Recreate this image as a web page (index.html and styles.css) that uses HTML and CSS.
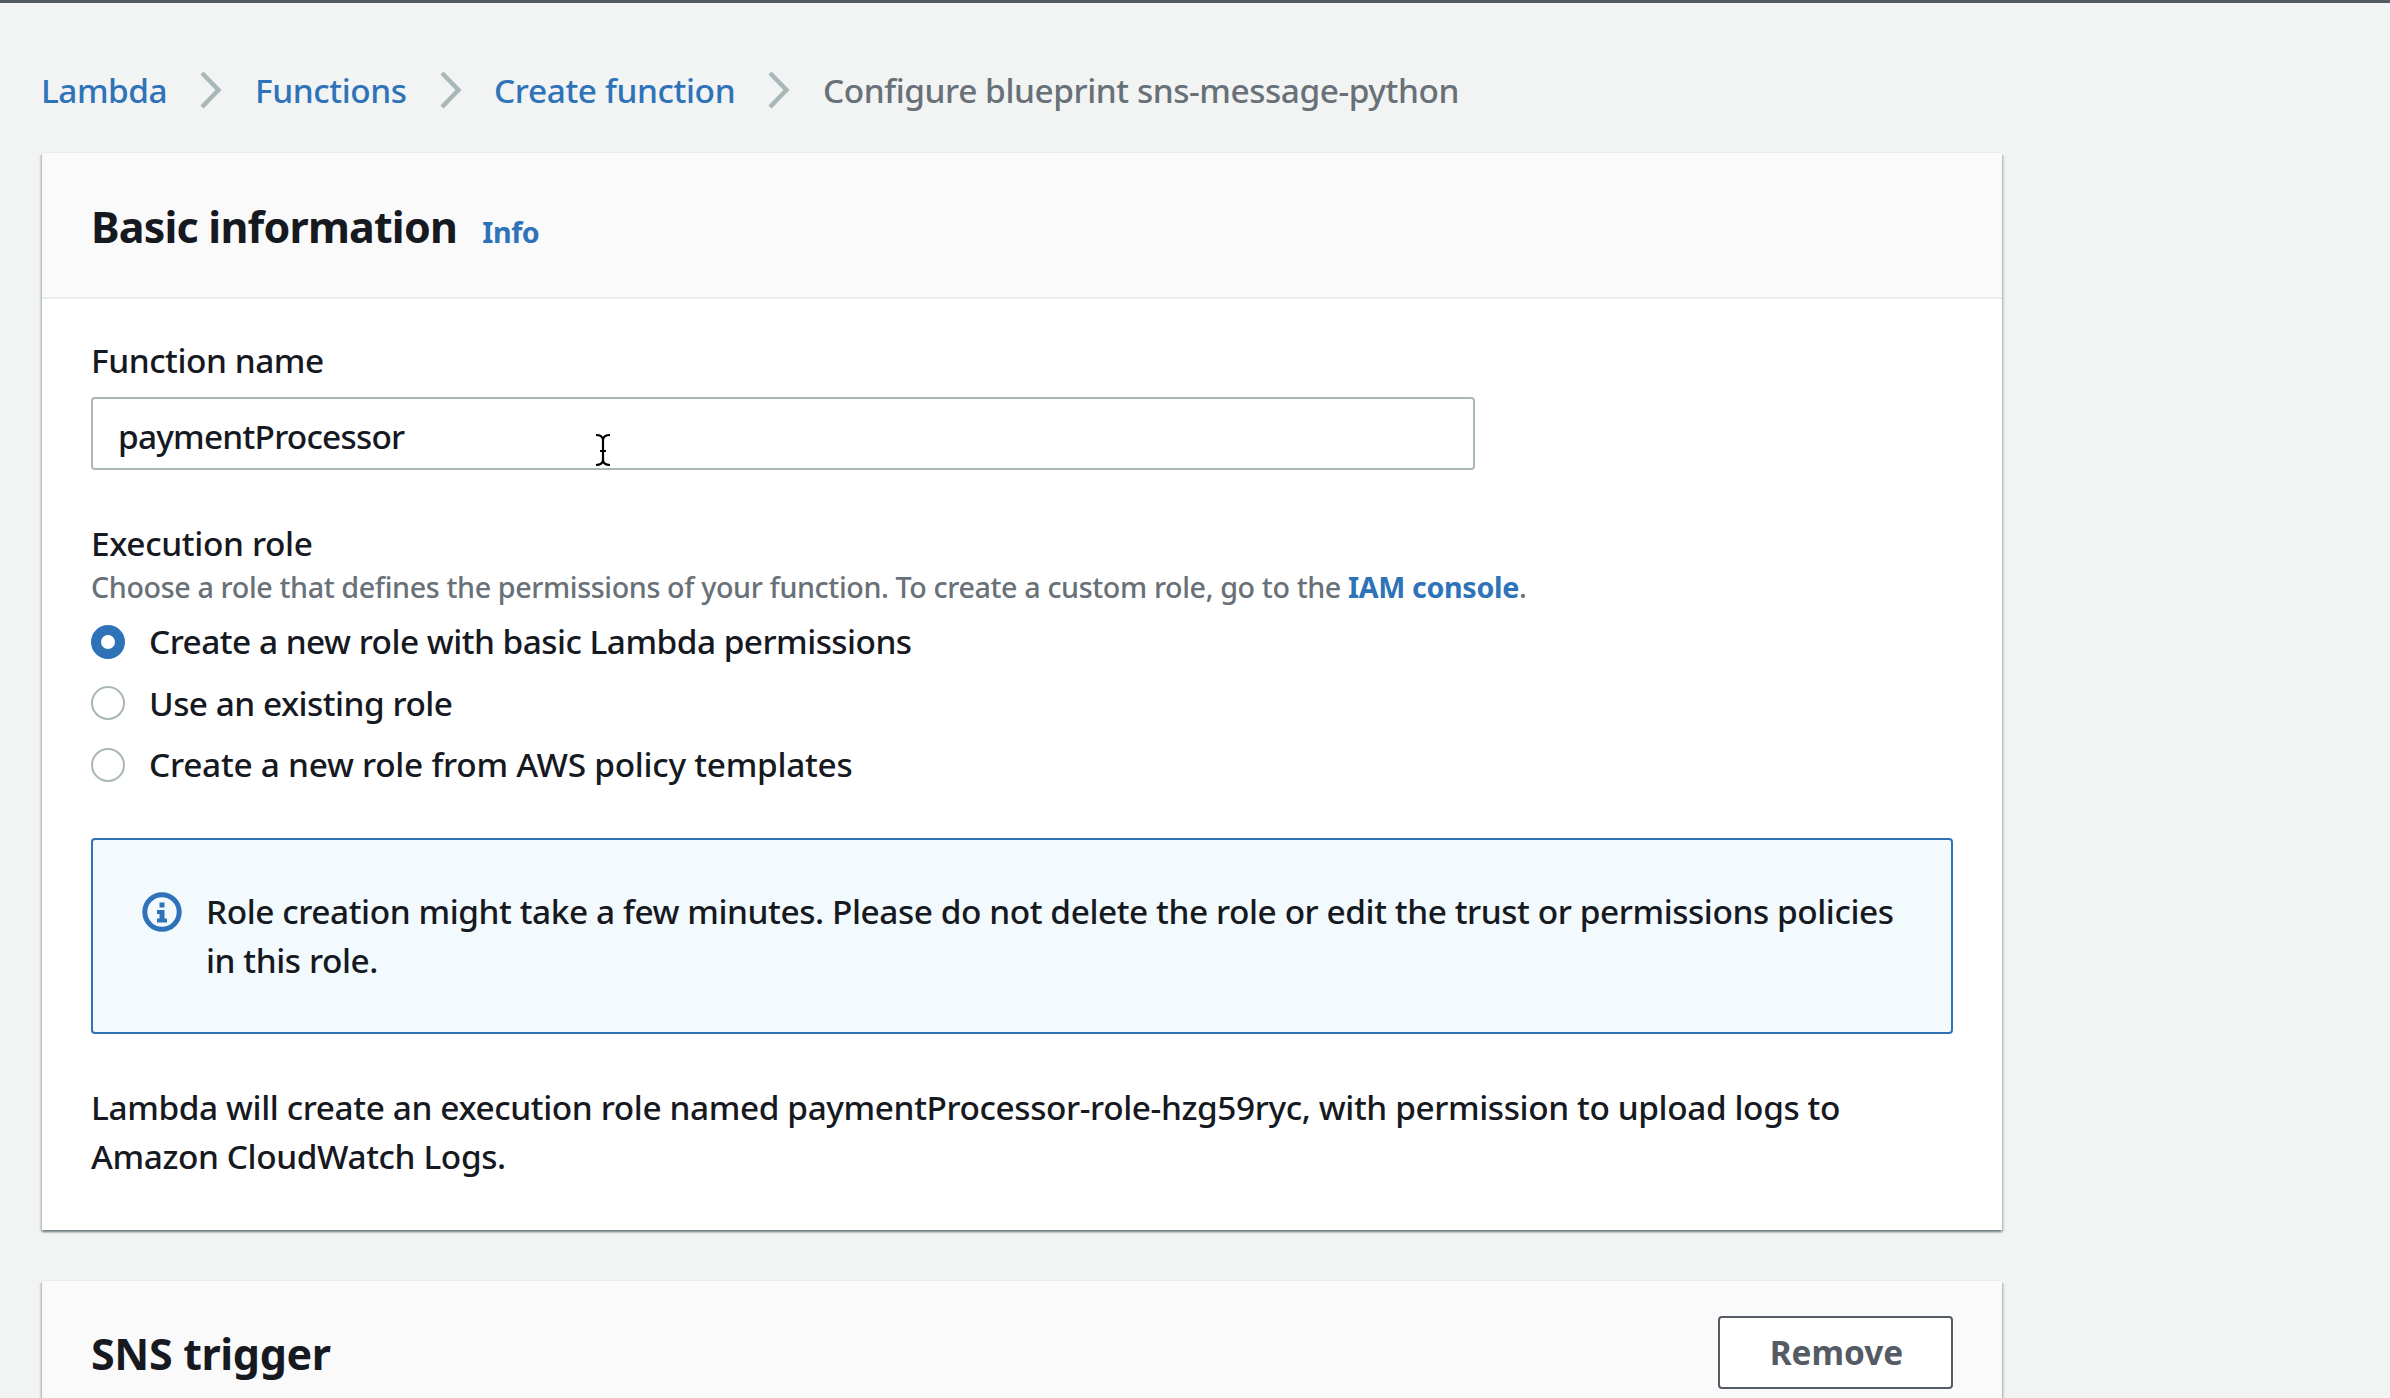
FILE: index.html
```
<!DOCTYPE html>
<html lang="en">
<head>
<meta charset="utf-8">
<title>Configure blueprint - Lambda</title>
<link rel="stylesheet" href="styles.css">
</head>
<body>
<nav class="breadcrumbs">
  <a class="crumb crumb-root" href="#">Lambda</a>
  <svg class="chevron" viewBox="0 0 22 38"><path d="M2 2 L18.5 19 L2 36"/></svg>
  <a class="crumb crumb-functions" href="#">Functions</a>
  <svg class="chevron" viewBox="0 0 22 38"><path d="M2 2 L18.5 19 L2 36"/></svg>
  <a class="crumb crumb-create" href="#">Create function</a>
  <svg class="chevron" viewBox="0 0 22 38"><path d="M2 2 L18.5 19 L2 36"/></svg>
  <span class="crumb crumb-current">Configure blueprint sns-message-python</span>
</nav>
<main>
  <section class="card">
    <header class="card-header">
      <h2 class="title">Basic information</h2>
      <a class="info" href="#">Info</a>
    </header>
    <div class="card-body">
      <label class="label" for="fn">Function name</label>
      <div class="field">
        <input class="input" id="fn" type="text" value="paymentProcessor">
        <svg class="cursor" viewBox="0 0 16 34"><path d="M1 2 C5 2 7.5 3.5 8 6.5 C8.500 3.5 11 2 15 2 M8 6 V28 M5 18 H11 M1 32 C5 32 7.500 30.500 8 27.500 C8.500 30.500 11 32 15 32"/></svg>
      </div>
      <div class="label role-label">Execution role</div>
      <p class="hint">Choose a role that defines the permissions of your function. To create a custom role, go to the <a class="hint-link" href="#">IAM console</a>.</p>
      <div class="radios">
        <div class="radio"><span class="dot dot-on"></span><span class="radio-basic">Create a new role with basic Lambda permissions</span></div>
        <div class="radio"><span class="dot"></span><span class="radio-existing">Use an existing role</span></div>
        <div class="radio"><span class="dot"></span><span class="radio-templates">Create a new role from AWS policy templates</span></div>
      </div>
      <div class="alert">
        <svg class="alert-icon" viewBox="0 0 40 40"><circle cx="20" cy="20" r="17.200"/><path d="M17.500 10.500h5v5h-5z M15 18h7.500v8.500H25v4H15v-4h2.500V22H15z"/></svg>
        <p>Role creation might take a few minutes. Please do not delete the role or edit the trust or permissions policies<br>in this role.</p>
      </div>
      <p class="summary">Lambda will create an execution role named paymentProcessor-role-hzg59ryc, with permission to upload logs to<br>Amazon CloudWatch Logs.</p>
    </div>
  </section>
  <section class="card trigger-card">
    <header class="card-header trigger-header">
      <h2 class="title trigger-title">SNS trigger</h2>
      <button class="button" type="button">Remove</button>
    </header>
  </section>
</main>
</body>
</html>
```
FILE: styles.css
```
* {
  box-sizing: border-box;
}

body {
  margin: 0;
  height: 1398px;
  overflow: hidden;
  border-top: 3px solid #545b64;
  background: #f2f4f4;
  color: #16191f;
  font: 500 33.4px/49px "Noto Sans", sans-serif;
  letter-spacing: -0.4px;
}

p,
h2 {
  margin: 0;
}

a {
  color: #2e73b8;
  text-decoration: none;
}

.breadcrumbs {
  display: flex;
  align-items: center;
  height: 49px;
  margin: 62px 0 39px 41px;
  white-space: nowrap;
}

.crumb {
  padding-top: 1px;
}

.crumb-root {
  width: 159px;
  letter-spacing: -0.5px;
}

.crumb-functions {
  width: 185px;
  margin-left: 1px;
  letter-spacing: -0.4px;
}

.crumb-create {
  width: 274px;
  letter-spacing: -0.38px;
}

.crumb-current {
  margin-left: 1px;
  color: #687078;
  letter-spacing: -0.43px;
}

.chevron {
  flex: none;
  width: 22px;
  height: 38px;
  margin-right: 32px;
  fill: none;
  stroke: #aab7b8;
  stroke-width: 4.5;
}

.card {
  width: 1960px;
  margin: 0 0 0 42px;
  background: #fff;
  box-shadow: 0 2px 2px 0 rgba(0, 28, 36, 0.4), 2px 2px 2px 0 rgba(0, 28, 36, 0.13), -2px 2px 2px 0 rgba(0, 28, 36, 0.13), 0 -1px 0 #eaeded;
}

.card-header {
  display: flex;
  align-items: baseline;
  height: 146px;
  padding: 44px 49px 0;
  border-bottom: 2px solid #eaeded;
  background: #fafafa;
}

.title {
  font-size: 43px;
  font-weight: 700;
  line-height: 60px;
  letter-spacing: -0.8px;
}

.info {
  margin-left: 25px;
  font-size: 28.7px;
  font-weight: 700;
  letter-spacing: -0.4px;
}

.card-body {
  padding: 37px 49px 49px;
}

.label {
  display: block;
  letter-spacing: -0.45px;
}

.field {
  position: relative;
  width: 1384px;
  margin-top: 12px;
}

.input {
  display: block;
  width: 100%;
  height: 73px;
  padding: 4px 25px 0;
  border: 2px solid #aab7b8;
  border-radius: 4px;
  background: #fff;
  color: inherit;
  font: inherit;
  letter-spacing: -0.77px;
}

.cursor {
  position: absolute;
  left: 504px;
  top: 36px;
  width: 16px;
  height: 34px;
  fill: none;
  stroke: #000;
  stroke-width: 2.2;
}

.role-label {
  margin-top: 49px;
  letter-spacing: -0.35px;
}

.hint {
  margin-top: -1px;
  color: #687078;
  font-size: 28.7px;
  line-height: 39px;
  letter-spacing: -0.38px;
  white-space: nowrap;
}

.hint-link {
  font-weight: 700;
  letter-spacing: -0.37px;
}

.radios {
  display: grid;
  gap: 12.5px;
  margin-top: 11px;
}

.radio {
  display: flex;
  align-items: center;
  gap: 24px;
}

.dot {
  width: 34px;
  height: 34px;
  border: 2px solid #aab7b8;
  border-radius: 50%;
  background: #fff;
}

.dot-on {
  border: 10px solid #2e73b8;
}

.radio-basic {
  letter-spacing: -0.52px;
}

.radio-existing {
  letter-spacing: -0.5px;
}

.radio-templates {
  letter-spacing: -0.26px;
}

.alert {
  display: flex;
  align-items: flex-start;
  gap: 24px;
  height: 196px;
  margin-top: 49px;
  padding: 47px 0 0 49px;
  border: 2px solid #2e73b8;
  border-radius: 4px;
  background: #f2fafd;
  letter-spacing: -0.42px;
  white-space: nowrap;
}

.alert-icon {
  flex: none;
  width: 40px;
  height: 40px;
  margin-top: 5px;
  fill: #2e73b8;
}

.alert-icon circle {
  fill: none;
  stroke: #2e73b8;
  stroke-width: 5;
}

.summary {
  margin-top: 49px;
  letter-spacing: -0.39px;
  white-space: nowrap;
}

.trigger-card {
  margin-top: 51px;
}

.trigger-header {
  justify-content: space-between;
  align-items: flex-start;
  height: 117px;
  padding-top: 35px;
  border-bottom: 0;
}

.trigger-title {
  margin-top: 8px;
  letter-spacing: -0.35px;
}

.button {
  width: 235px;
  height: 73px;
  padding: 0 0 0 2px;
  border: 2px solid #545b64;
  border-radius: 4px;
  background: #fff;
  color: #545b64;
  font: 700 33.4px/49px "Noto Sans", sans-serif;
}
```
